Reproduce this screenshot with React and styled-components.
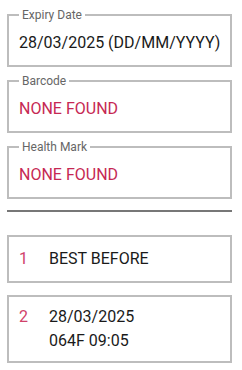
import styled, { createGlobalStyle } from "styled-components";

const GlobalStyle = createGlobalStyle`
  body {
    margin: 0;
    background: #fff;
    font-family: Roboto, "Noto Sans", sans-serif;
  }
`;

const Page = styled.div`
  display: flex;
  flex-direction: column;
  padding: 8px 10px 8px 7px;
`;

const Field = styled.fieldset`
  margin: 0 0 7px;
  padding: 9px 2px 10px 10px;
  border: 2px solid #bdbdbd;
  min-width: 0;
`;

const Legend = styled.legend`
  padding: 0 3px;
  font-size: 12px;
  line-height: 14px;
  color: #666;
`;

const Value = styled.div`
  font-size: 16px;
  line-height: 24px;
  white-space: nowrap;
  color: ${(p) => (p.$missing ? "#c62853" : "#1a1a1a")};
`;

const Divider = styled.hr`
  margin: 4px 0 23px;
  border: none;
  height: 2px;
  background: #777;
`;

const Row = styled.div`
  display: flex;
  border: 2px solid #bdbdbd;
  padding: ${(p) => (p.$multi ? "8px 10px" : "10px 10px")};
  margin-bottom: 12px;
`;

const Num = styled.div`
  width: 30px;
  flex: none;
  font-size: 16px;
  line-height: 24px;
  color: #d0426a;
`;

const Lines = styled.div`
  font-size: 16px;
  line-height: 24px;
  color: #1a1a1a;
`;

export default function App() {
  const fields = [
    { label: "Expiry Date", value: "28/03/2025 (DD/MM/YYYY)" },
    { label: "Barcode", value: null },
    { label: "Health Mark", value: null },
  ];
  const rows = [["BEST BEFORE"], ["28/03/2025", "064F 09:05"]];
  return (
    <>
      <GlobalStyle />
      <Page>
        {fields.map((f) => (
          <Field key={f.label}>
            <Legend>{f.label}</Legend>
            <Value $missing={!f.value}>{f.value || "NONE FOUND"}</Value>
          </Field>
        ))}
        <Divider />
        {rows.map((lines, i) => (
          <Row key={i} $multi={lines.length > 1}>
            <Num>{i + 1}</Num>
            <Lines>
              {lines.map((l) => (
                <div key={l}>{l}</div>
              ))}
            </Lines>
          </Row>
        ))}
      </Page>
    </>
  );
}
